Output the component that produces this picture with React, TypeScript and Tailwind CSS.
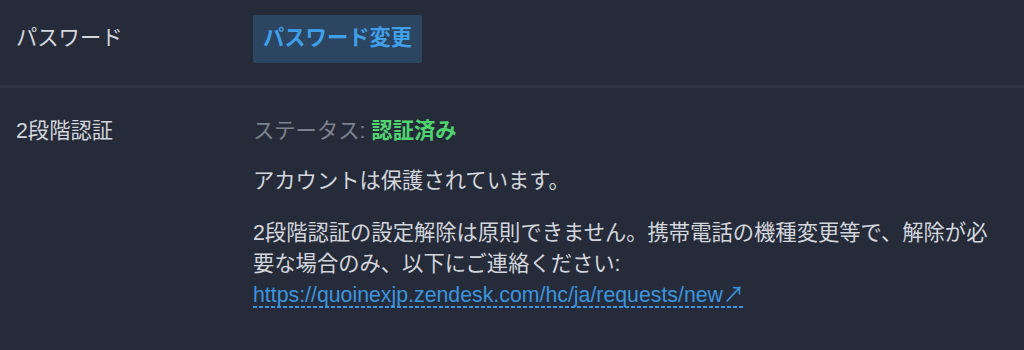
export default function App() {
  const font = "font-['Liberation_Sans','Noto_Sans_CJK_JP',sans-serif]";
  return (
    <div className={`min-h-[350px] w-full bg-[#262b3a] text-[21.3px] text-[#d3d6dc] ${font}`}>
      <div className="flex items-center border-b-[3px] border-[#2f3546] pl-4 pr-6 pt-[15px] pb-[22px]">
        <div className="w-[237px] shrink-0">パスワード</div>
        <button
          type="button"
          className="h-12 rounded-[2px] bg-[#2c4561] px-[10px] font-bold text-[#3f9fe9]"
        >
          パスワード変更
        </button>
      </div>

      <div className="flex pl-4 pr-6 pt-[28px] leading-[31px]">
        <div className="w-[237px] shrink-0">2段階認証</div>
        <div className="flex-1">
          <p>
            <span className="text-[#7d828e]">ステータス: </span>
            <span className="font-bold text-[#4fd46f]">認証済み</span>
          </p>
          <p className="mt-[19px]">アカウントは保護されています。</p>
          <p className="mt-[21px]">
            2段階認証の設定解除は原則できません。携帯電話の機種変更等で、解除が必要な場合のみ、以下にご連絡ください:
          </p>
          <a
            href="#"
            className="mt-[2px] inline-block bg-[repeating-linear-gradient(to_right,#3a95df_0_4px,transparent_4px_6px)] bg-[length:100%_2px] bg-bottom bg-no-repeat pb-[2px] leading-[22px] text-[#3a95df]"
          >
            https://quoinexjp.zendesk.com/hc/ja/requests/new
            <span className="font-['Noto_Sans_CJK_JP',sans-serif]">↗</span>
          </a>
        </div>
      </div>
    </div>
  );
}
